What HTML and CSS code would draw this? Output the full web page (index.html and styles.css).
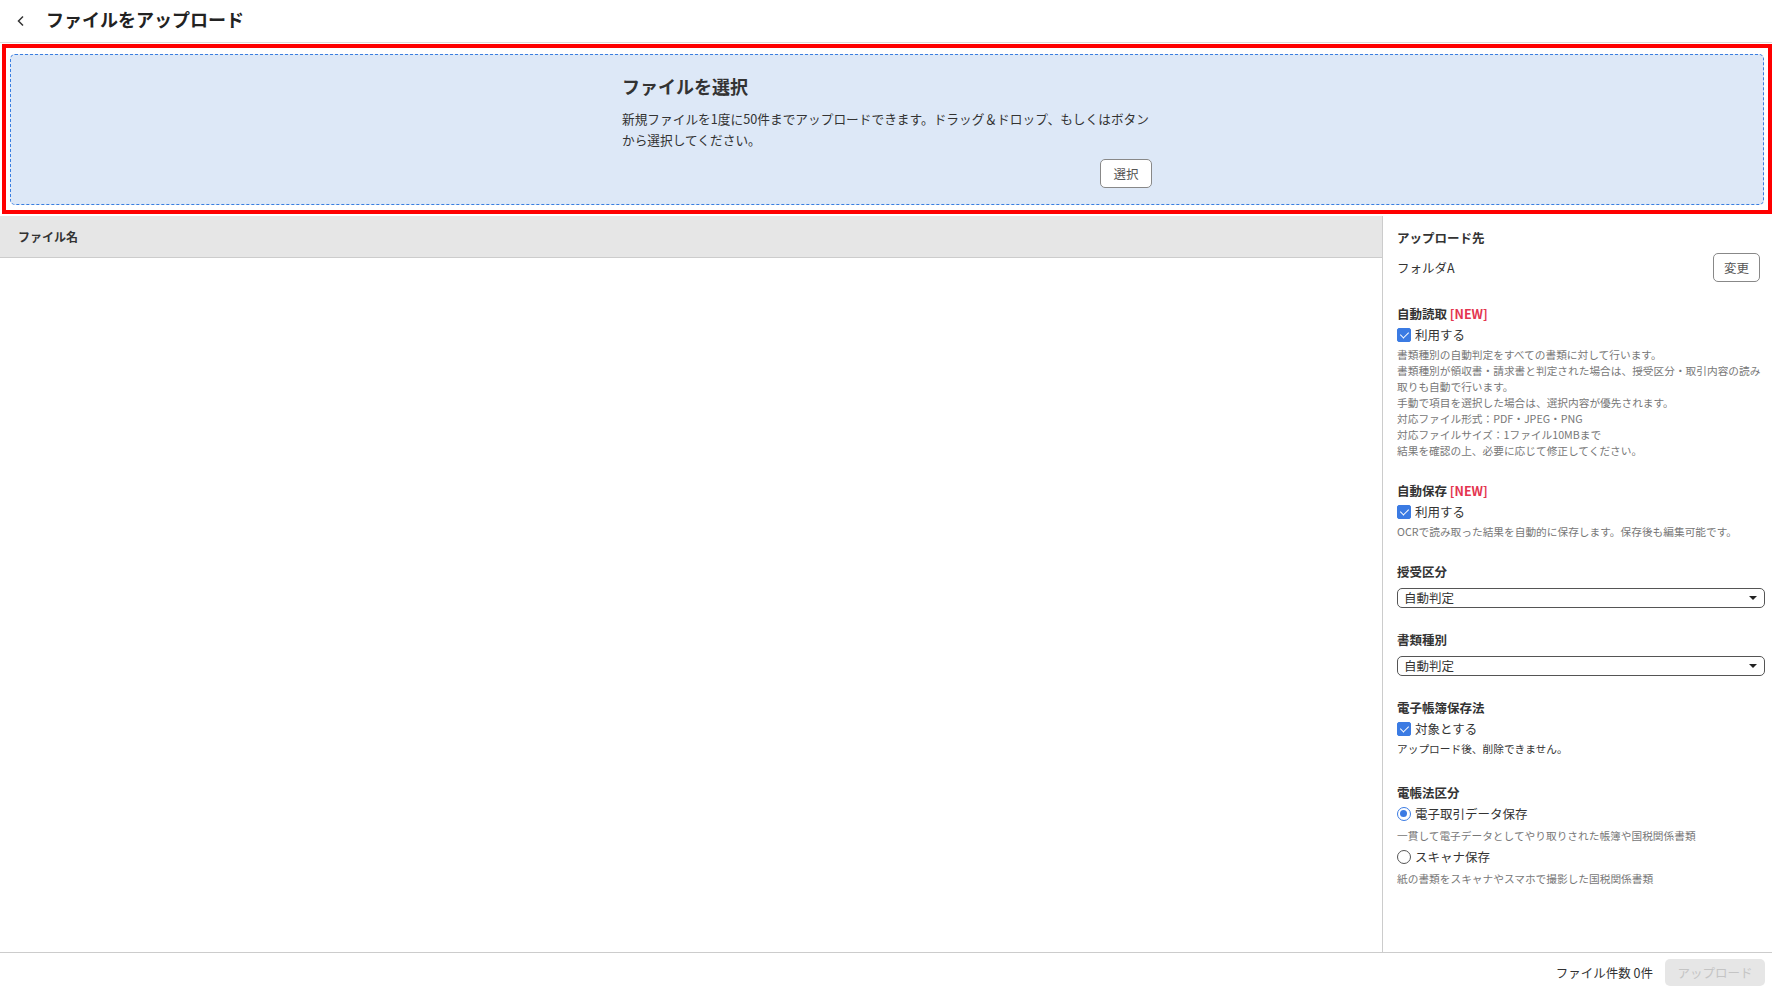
FILE: index.html
```html
<!DOCTYPE html>
<html lang="ja">
<head>
  <meta charset="UTF-8" />
  <title>ファイルをアップロード</title>
  <link rel="stylesheet" href="styles.css">
</head>
<body>

<div class="page">

  <div class="page-header">
    <button class="back-button" aria-label="戻る">
      <svg width="10" height="12" viewBox="0 0 10 12"><path d="M7 1.5 L2.5 6 L7 10.5" fill="none" stroke="#333" stroke-width="1.5"/></svg>
    </button>
    <h1>ファイルをアップロード</h1>
  </div>

  <div class="upload-area">
    <div class="drop-frame">
      <div class="drop-zone">
        <div class="drop-content">
          <h2>ファイルを選択</h2>
          <p>新規ファイルを1度に50件までアップロードできます。ドラッグ＆ドロップ、もしくはボタンから選択してください。</p>
          <div class="drop-actions"><button class="btn btn-select">選択</button></div>
        </div>
      </div>
    </div>
  </div>

  <div class="main">
    <div class="file-list">
      <div class="file-list-header">ファイル名</div>
    </div>

    <div class="settings">
      <div class="section">
        <div class="section-title">アップロード先</div>
        <div class="folder-row">
          <span>フォルダA</span>
          <button class="btn">変更</button>
        </div>
      </div>

      <div class="section">
        <div class="section-title">自動読取 <span class="new">[NEW]</span></div>
        <label class="check-row"><span class="checkbox checked"></span>利用する</label>
        <div class="note">
          書類種別の自動判定をすべての書類に対して行います。<br>
          書類種別が領収書・請求書と判定された場合は、授受区分・取引内容の読み取りも自動で行います。<br>
          手動で項目を選択した場合は、選択内容が優先されます。<br>
          対応ファイル形式：PDF・JPEG・PNG<br>
          対応ファイルサイズ：1ファイル10MBまで<br>
          結果を確認の上、必要に応じて修正してください。
        </div>
      </div>

      <div class="section">
        <div class="section-title">自動保存 <span class="new">[NEW]</span></div>
        <label class="check-row"><span class="checkbox checked"></span>利用する</label>
        <div class="note">OCRで読み取った結果を自動的に保存します。保存後も編集可能です。</div>
      </div>

      <div class="section">
        <div class="section-title">授受区分</div>
        <div class="select">自動判定</div>
      </div>

      <div class="section">
        <div class="section-title">書類種別</div>
        <div class="select">自動判定</div>
      </div>

      <div class="section">
        <div class="section-title">電子帳簿保存法</div>
        <label class="check-row"><span class="checkbox checked"></span>対象とする</label>
        <div class="note dark">アップロード後、削除できません。</div>
      </div>

      <div class="section section-wide">
        <div class="section-title">電帳法区分</div>
        <label class="check-row"><span class="radio checked"></span>電子取引データ保存</label>
        <div class="note radio-note">一貫して電子データとしてやり取りされた帳簿や国税関係書類</div>
        <label class="check-row radio-row"><span class="radio"></span>スキャナ保存</label>
        <div class="note radio-note">紙の書類をスキャナやスマホで撮影した国税関係書類</div>
      </div>
    </div>
  </div>

  <div class="page-footer">
    <span class="file-count">ファイル件数 0件</span>
    <button class="upload-button" disabled>アップロード</button>
  </div>

</div>

</body>
</html>
```

FILE: styles.css
```css
* {
  box-sizing: border-box;
}

body {
  margin: 0;
  font-family: "Noto Sans CJK JP", "Noto Sans", sans-serif;
  color: #333;
  background: #fff;
}

.page {
  display: flex;
  flex-direction: column;
  height: 100vh;
}

/* Header: back arrow + page title */
.page-header {
  display: flex;
  align-items: center;
  height: 43px;
  padding-bottom: 4px;
  border-bottom: 1px solid #ddd;
  flex-shrink: 0;
}

.back-button {
  background: none;
  border: none;
  padding: 0 0 0 16px;
  margin: 4px 20px 0 0;
  display: flex;
  cursor: pointer;
}

h1 {
  margin: 0;
  font-size: 18px;
  font-weight: 700;
  color: #222;
}

/* Drop area */
.upload-area {
  flex-shrink: 0;
  padding: 1px 0 2px 2px;
}

.drop-frame {
  border: 4px solid #f00;
  padding: 6px 4px 5px 4px;
}

.drop-zone {
  display: flex;
  justify-content: center;
  padding: 19px 0 16px;
  background: #dde8f7;
  border: 1px dashed #3a7ee0;
  border-radius: 5px;
}

.drop-content {
  width: 530px;
}

h2 {
  margin: 0;
  font-size: 18px;
  line-height: 24px;
  font-weight: 700;
  color: #333;
}

.drop-content p {
  margin: 10px 0 0;
  font-size: 12.7px;
  line-height: 21px;
  color: #333;
}

.drop-actions {
  display: flex;
  justify-content: flex-end;
  margin-top: 9px;
}

.btn {
  font-family: inherit;
  font-size: 12.5px;
  color: #555;
  background: #fff;
  border: 1px solid #888;
  border-radius: 5px;
  height: 29px;
  width: 47px;
  padding: 0;
  cursor: pointer;
}

.btn-select {
  width: 52px;
}

/* Main: file list + settings panel */
.main {
  flex: 1;
  display: flex;
  min-height: 0;
}

.file-list {
  flex: 1;
  border-right: 1px solid #ccc;
}

.file-list-header {
  height: 42px;
  line-height: 41px;
  padding-left: 18px;
  background: #e6e6e6;
  border-bottom: 1px solid #ccc;
  font-size: 12px;
  font-weight: 700;
}

.settings {
  width: 389px;
  padding: 12px 4px 0 14px;
  font-size: 12.5px;
}

.section {
  margin-bottom: 22px;
}

/* collapses with the previous section's bottom margin */
.section-wide {
  margin-top: 26px;
}

.section-title {
  line-height: 20px;
  font-weight: 700;
}

.new {
  color: #e4344f;
}

.folder-row {
  display: flex;
  justify-content: space-between;
  align-items: center;
  margin-top: 5px;
  padding-right: 8px;
}

.check-row {
  display: flex;
  align-items: center;
  gap: 4px;
  line-height: 20px;
  margin-top: 1px;
}

.checkbox {
  width: 14px;
  height: 14px;
  border-radius: 2px;
  border: 1px solid #777;
  position: relative;
}

.checkbox.checked {
  background: #3b7be3;
  border-color: #3b7be3;
}

/* white tick inside the checked box */
.checkbox.checked::after {
  content: "";
  position: absolute;
  left: 4px;
  top: 1px;
  width: 4px;
  height: 7px;
  border: solid #fff;
  border-width: 0 1.5px 1.5px 0;
  transform: rotate(45deg);
}

.radio {
  width: 14px;
  height: 14px;
  border-radius: 50%;
  border: 1.5px solid #555;
  position: relative;
}

.radio.checked {
  border-color: #3b7be3;
}

.radio.checked::after {
  content: "";
  position: absolute;
  left: 2px;
  top: 2px;
  width: 7px;
  height: 7px;
  border-radius: 50%;
  background: #3b7be3;
}

.note {
  margin-top: 2px;
  font-size: 10.7px;
  line-height: 16px;
  color: #777;
}

.note.dark {
  color: #333;
}

.radio-note {
  margin-top: 4px;
}

.radio-row {
  margin-top: 3px;
}

.select {
  position: relative;
  margin: 6px 3px 0 0;
  height: 20px;
  line-height: 18px;
  padding-left: 6px;
  border: 1px solid #555;
  border-radius: 5px;
}

/* dropdown arrow */
.select::after {
  content: "";
  position: absolute;
  right: 7px;
  top: 7px;
  border-left: 4px solid transparent;
  border-right: 4px solid transparent;
  border-top: 4px solid #222;
}

/* Footer */
.page-footer {
  display: flex;
  justify-content: flex-end;
  align-items: center;
  gap: 12px;
  height: 39px;
  padding-right: 7px;
  border-top: 1px solid #ccc;
  flex-shrink: 0;
}

.file-count {
  font-size: 12.5px;
}

.upload-button {
  font-family: inherit;
  font-size: 12.5px;
  width: 100px;
  height: 27px;
  border: none;
  border-radius: 5px;
  background: #e6e6e6;
  color: #c4c4c4;
}
```
